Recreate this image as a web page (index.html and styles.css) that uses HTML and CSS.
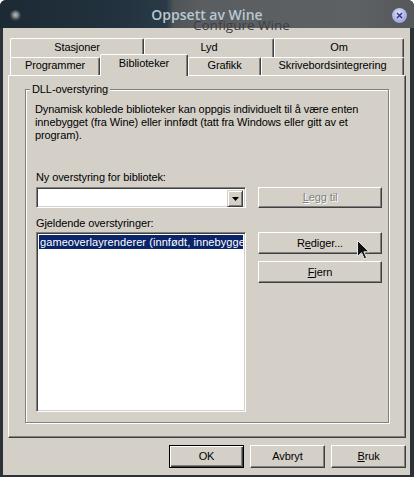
FILE: index.html
```html
<!DOCTYPE html>
<html lang="no">
<head>
<meta charset="utf-8">
<title>Oppsett av Wine</title>
<link rel="stylesheet" href="styles.css">
</head>
<body>
<div class="window">
  <div class="titlebar">
    <span class="knob"></span>
    <span class="ghost">Configure Wine</span>
    <span class="title">Oppsett av Wine</span>
    <span class="close"><svg width="15" height="15" viewBox="0 0 15 15"><path d="M5 5L10 10M10 5L5 10" stroke="#2b3170" stroke-width="1.3" fill="none"/></svg></span>
  </div>
  <div class="client">
    <div class="tabs">
      <div class="tabrow back">
        <div class="tab w134">Stasjoner</div>
        <div class="tab w130">Lyd</div>
        <div class="tab w130">Om</div>
      </div>
      <div class="tabrow front">
        <div class="tab w90">Programmer</div>
        <div class="tab sel w88">Biblioteker</div>
        <div class="tab w73">Grafikk</div>
        <div class="tab w143">Skrivebordsintegrering</div>
      </div>
    </div>
    <div class="panel">
      <div class="group">
        <span class="legend">DLL-overstyring</span>
        <p class="desc">Dynamisk koblede biblioteker kan oppgis individuelt til å være enten<br>innebygget (fra Wine) eller innfødt (tatt fra Windows eller gitt av et<br>program).</p>
        <div class="lbl first">Ny overstyring for bibliotek:</div>
        <div class="row r1">
          <div class="combo"><span class="ddbtn"><svg width="7" height="4" viewBox="0 0 7 4"><polygon points="0,0 7,0 3.5,4" fill="#000"/></svg></span></div>
          <button class="btn side h21 disabled"><span><u>L</u>egg til</span></button>
        </div>
        <div class="lbl second">Gjeldende overstyringer:</div>
        <div class="row r2">
          <div class="listbox">
            <div class="item">gameoverlayrenderer (innfødt, innebygget)</div>
          </div>
          <div class="sidecol">
            <button class="btn side h22">R<u>e</u>diger...</button>
            <button class="btn side h22"><u>F</u>jern</button>
          </div>
        </div>
      </div>
    </div>
    <div class="footer">
      <button class="btn foot default">OK</button>
      <button class="btn foot">Avbryt</button>
      <button class="btn foot"><u>B</u>ruk</button>
    </div>
  </div>
  <svg class="cursor" width="13" height="20" viewBox="0 0 13 20"><path d="M0.5 0.5V16.5L4.5 12.7L7.3 18.8L9.6 17.8L6.9 11.8H12Z" fill="#111" stroke="#e8e8e8" stroke-width="1" stroke-linejoin="round"/></svg>
</div>
</body>
</html>
```
FILE: styles.css
```css
html, body {
  margin: 0;
  padding: 0;
  background: #ffffff;
}
body {
  font-family: "Liberation Sans", Arial, sans-serif;
  font-size: 11px;
  letter-spacing: -0.1px;
  color: #000;
}
.window {
  position: relative;
  width: 414px;
  height: 477px;
  background: #2c3338;
  display: flex;
  flex-direction: column;
  border-radius: 6px 6px 0 0;
  overflow: hidden;
}
.titlebar {
  position: relative;
  flex: none;
  height: 28px;
  display: grid;
  grid-template-columns: 1fr auto 1fr;
  align-items: center;
  background: linear-gradient(to right, #1c2a34 0, #22323e 120px, #2a3a46 166px, #4f5457 174px, #5b5e61 200px, #5e6163 360px, #55585b 100%);
}
.knob {
  justify-self: start;
  margin-left: 10px;
  margin-top: 2px;
  width: 11px;
  height: 11px;
  border-radius: 50%;
  background: radial-gradient(circle at 50% 45%, #b4babe 0, #8e9498 2px, #50575c 4px, #30373c 5.5px);
}
.ghost {
  position: absolute;
  left: 193px;
  top: 16px;
  font-family: "Open Sans", sans-serif;
  font-size: 13.5px;
  line-height: 19px;
  letter-spacing: 0;
  color: #3c4044;
}
.title {
  position: relative;
  font-family: "Open Sans", sans-serif;
  font-weight: 600;
  font-size: 14px;
  letter-spacing: 0;
  color: #b8c8d3;
}
.close {
  justify-self: end;
  margin-right: 7px;
  margin-top: 2px;
  width: 15px;
  height: 15px;
  border-radius: 50%;
  background: radial-gradient(circle at 45% 35%, #e2e4f8 0, #b3b8ea 45%, #8a91d6 100%);
  display: flex;
}
.client {
  flex: 1;
  margin: 0 4px 2px 3px;
  background: #d4d0c8;
  display: flex;
  flex-direction: column;
}
.tabs {
  margin: 10px 0 0 7px;
  width: 394px;
}
.tabrow {
  display: flex;
}
.tab {
  box-sizing: border-box;
  flex: none;
  border-top: 1px solid #fff;
  border-left: 1px solid #fff;
  border-right: 1px solid #404040;
  box-shadow: inset -1px 0 #808080;
  border-radius: 2px 2px 0 0;
  background: #d4d0c8;
  text-align: center;
  white-space: nowrap;
}
.back .tab {
  height: 19px;
  line-height: 17px;
}
.front {
  height: 18px;
}
.front .tab {
  height: 18px;
  line-height: 15px;
}
.front .tab.sel {
  position: relative;
  z-index: 1;
  height: 22px;
  margin-top: -3px;
  line-height: 17px;
  box-shadow: inset -1px 0 #808080;
}
.w134 { width: 134px; }
.w130 { width: 130px; }
.w90 { width: 90px; }
.w88 { width: 88px; }
.w73 { width: 73px; }
.w143 { width: 143px; }
.panel {
  margin-left: 5px;
  width: 398px;
  height: 363px;
  box-sizing: border-box;
  border: 1px solid;
  border-color: #fff #404040 #404040 #fff;
  box-shadow: inset -1px -1px #808080;
  padding: 13px 0 0 16px;
}
.group {
  position: relative;
  box-sizing: border-box;
  width: 364px;
  height: 334px;
  border: 1px solid #808080;
  box-shadow: inset 1px 1px #fff, 1px 1px #fff;
  padding: 13px 0 0 9px;
}
.legend {
  position: absolute;
  left: 4px;
  top: -7px;
  padding: 0 2px;
  line-height: 13px;
  background: #d4d0c8;
}
.desc {
  margin: 0;
  line-height: 13px;
  white-space: nowrap;
}
.lbl {
  line-height: 13px;
  margin-left: 1px;
}
.lbl.first { margin-top: 29px; }
.lbl.second { margin-top: 9px; }
.row {
  display: flex;
  align-items: flex-start;
  margin-left: 1px;
}
.row.r1 { margin-top: 3px; }
.row.r2 { margin-top: 2px; }
.combo {
  box-sizing: border-box;
  width: 210px;
  height: 21px;
  padding: 2px;
  border: 1px solid;
  border-color: #808080 #fff #fff #808080;
  box-shadow: inset 1px 1px #404040, inset -1px -1px #d4d0c8;
  background: #fff;
  display: flex;
  justify-content: flex-end;
}
.ddbtn {
  box-sizing: border-box;
  width: 16px;
  height: 17px;
  border: 1px solid;
  border-color: #d4d0c8 #404040 #404040 #d4d0c8;
  box-shadow: inset 1px 1px #fff, inset -1px -1px #808080;
  background: #d4d0c8;
  display: flex;
  align-items: center;
  justify-content: center;
}
.btn {
  box-sizing: border-box;
  margin: 0;
  padding: 0;
  border: 1px solid;
  border-color: #fff #404040 #404040 #fff;
  box-shadow: inset -1px -1px #808080;
  background: #d4d0c8;
  font: inherit;
  letter-spacing: inherit;
  color: #000;
  display: flex;
  align-items: center;
  justify-content: center;
  line-height: 13px;
}
.btn.side {
  width: 124px;
}
.r1 .btn.side {
  margin-left: 12px;
}
.h21 { height: 21px; }
.h22 { height: 22px; }
.disabled {
  color: #808080;
  text-shadow: 1px 1px #fff;
}
.listbox {
  box-sizing: border-box;
  width: 210px;
  height: 180px;
  padding: 2px;
  border: 1px solid;
  border-color: #808080 #fff #fff #808080;
  box-shadow: inset 1px 1px #404040, inset -1px -1px #d4d0c8;
  background: #fff;
  overflow: hidden;
}
.item {
  height: 14px;
  line-height: 14px;
  padding-left: 1px;
  background: #0a246a;
  color: #fff;
  letter-spacing: 0.08px;
  white-space: nowrap;
  overflow: hidden;
}
.sidecol {
  margin-left: 12px;
  display: flex;
  flex-direction: column;
  gap: 7px;
}
.footer {
  display: flex;
  justify-content: flex-end;
  gap: 6px;
  margin-top: 7px;
  padding-right: 4px;
}
.btn.foot {
  width: 75px;
  height: 23px;
}
.btn.default {
  border-color: #000;
  box-shadow: inset 1px 1px #fff, inset -1px -1px #404040, inset -2px -2px #808080;
}
.cursor {
  position: absolute;
  left: 357px;
  top: 240px;
}
```
